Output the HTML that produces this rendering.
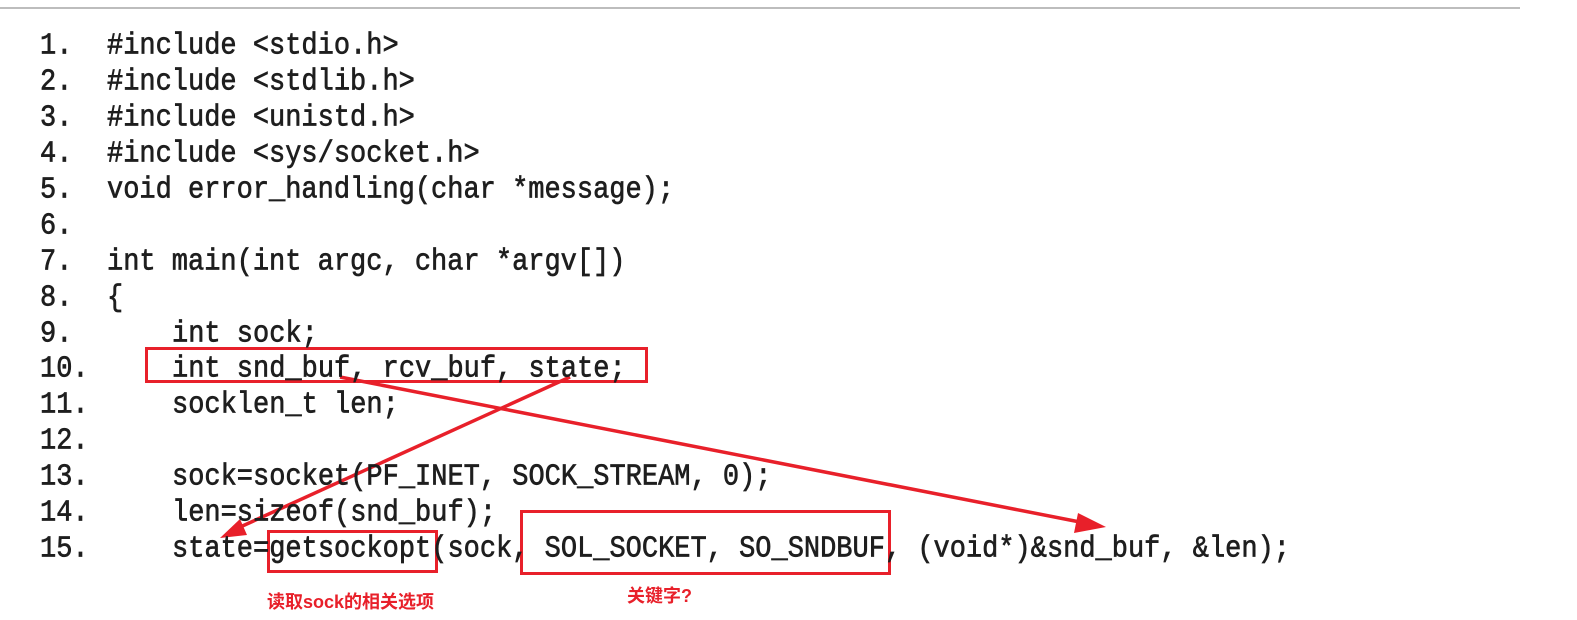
<!DOCTYPE html>
<html><head><meta charset="utf-8"><style>
html,body{margin:0;padding:0;background:#fff;}
body{width:1577px;height:620px;position:relative;overflow:hidden;background:#fff;}
.l{position:absolute;font-family:"Liberation Mono",monospace;font-size:27px;color:#1e1e1e;white-space:pre;line-height:30px;transform:scaleY(1.12);transform-origin:0 50%;-webkit-text-stroke:0.6px #1e1e1e;margin-top:3px;}
.n{left:40px;}
.lab{position:absolute;font-family:"Liberation Sans","Noto Sans CJK SC",sans-serif;font-weight:bold;color:#e8202a;font-size:18px;}
</style></head><body>
<div style="position:absolute;left:0;top:7px;width:1520px;height:2px;background:#bdbdbd"></div>
<svg width="1577" height="620" style="position:absolute;left:0;top:0">
<g fill="none" stroke="#e8202a" stroke-width="3">
<rect x="146.5" y="348.5" width="500" height="33"/>
<rect x="268.5" y="531.5" width="168" height="40"/>
<rect x="521.5" y="511.5" width="368" height="62"/>
</g>
<line x1="340" y1="377" x2="1085" y2="523" stroke="#e8202a" stroke-width="3.5"/>
<polygon points="1106,527 1078,513 1074,533" fill="#e8202a"/>
<line x1="570" y1="377" x2="238" y2="528" stroke="#e8202a" stroke-width="3.5"/>
<polygon points="220,538 240,519 247,535" fill="#e8202a"/>
</svg>
<div class="l n" style="top:29px">1.</div><div class="l" style="left:107px;top:29px">#include &lt;stdio.h&gt;</div>
<div class="l n" style="top:65px">2.</div><div class="l" style="left:107px;top:65px">#include &lt;stdlib.h&gt;</div>
<div class="l n" style="top:101px">3.</div><div class="l" style="left:107px;top:101px">#include &lt;unistd.h&gt;</div>
<div class="l n" style="top:137px">4.</div><div class="l" style="left:107px;top:137px">#include &lt;sys/socket.h&gt;</div>
<div class="l n" style="top:173px">5.</div><div class="l" style="left:107px;top:173px">void error_handling(char *message);</div>
<div class="l n" style="top:209px">6.</div>
<div class="l n" style="top:245px">7.</div><div class="l" style="left:107px;top:245px">int main(int argc, char *argv[])</div>
<div class="l n" style="top:281px">8.</div><div class="l" style="left:107px;top:281px">{</div>
<div class="l n" style="top:317px">9.</div><div class="l" style="left:172px;top:317px">int sock;</div>
<div class="l n" style="top:352px">10.</div><div class="l" style="left:172px;top:352px">int snd_buf, rcv_buf, state;</div>
<div class="l n" style="top:388px">11.</div><div class="l" style="left:172px;top:388px">socklen_t len;</div>
<div class="l n" style="top:424px">12.</div>
<div class="l n" style="top:460px">13.</div><div class="l" style="left:172px;top:460px">sock=socket(PF_INET, SOCK_STREAM, 0);</div>
<div class="l n" style="top:496px">14.</div><div class="l" style="left:172px;top:496px">len=sizeof(snd_buf);</div>
<div class="l n" style="top:532px">15.</div><div class="l" style="left:172px;top:532px">state=getsockopt(sock, SOL_SOCKET, SO_SNDBUF, (void*)&amp;snd_buf, &amp;len);</div>
<div class="lab" style="left:267px;top:588px">读取sock的相关选项</div>
<div class="lab" style="left:627px;top:582px">关键字?</div>
</body></html>
